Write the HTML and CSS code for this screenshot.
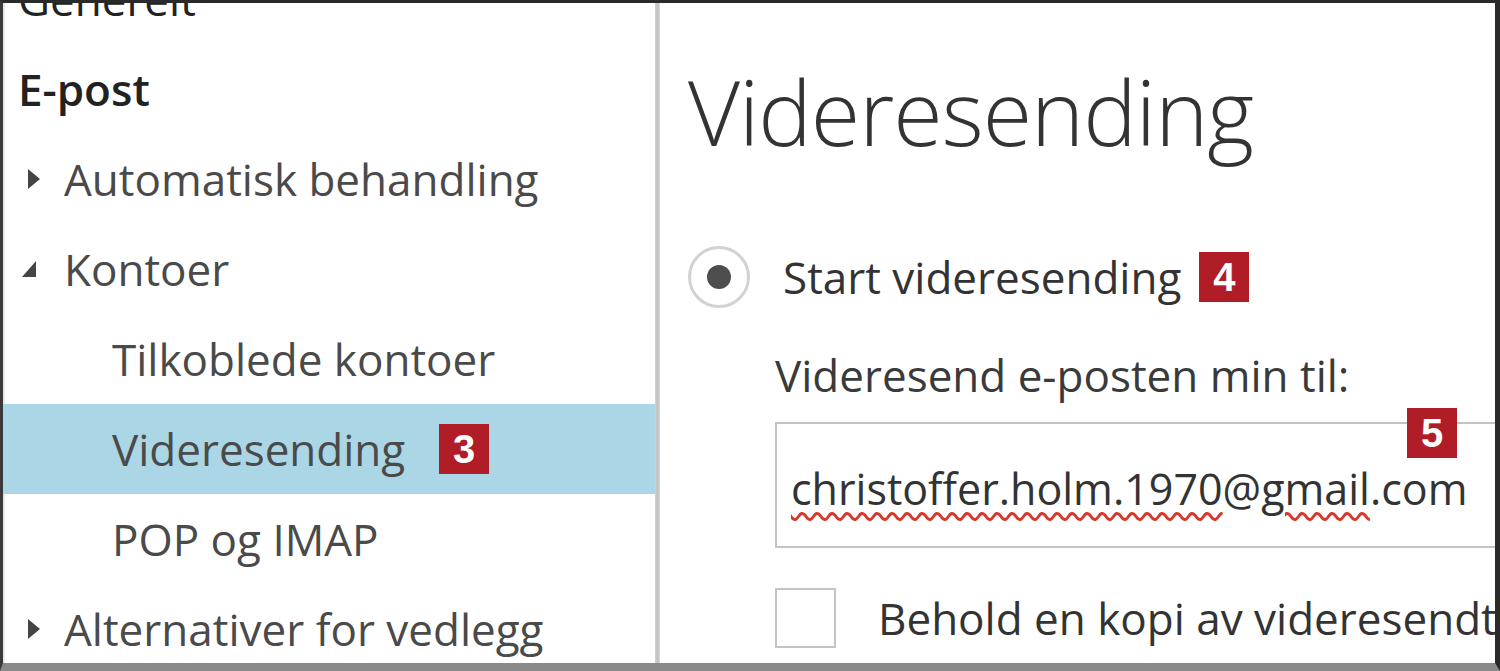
FILE: index.html
```html
<!DOCTYPE html>
<html lang="no">
<head>
<meta charset="utf-8">
<title>Videresending</title>
<link rel="stylesheet" href="styles.css">
</head>
<body>
<div class="frame">
  <nav class="nav">
    <div class="row top">Generelt</div>
    <div class="row top strong">E-post</div>
    <div class="row caret-row"><svg class="caret" width="16" height="24" viewBox="0 0 16 24"><polygon points="2,2 14,12 2,22" /></svg>Automatisk behandling</div>
    <div class="row caret-row"><svg class="caret open" width="16" height="24" viewBox="0 0 16 24"><polygon points="14,4 14,20 0,20" /></svg>Kontoer</div>
    <div class="row sub">Tilkoblede kontoer</div>
    <div class="row sub selected">Videresending <span class="badge">3</span></div>
    <div class="row sub">POP og IMAP</div>
    <div class="row caret-row"><svg class="caret" width="16" height="24" viewBox="0 0 16 24"><polygon points="2,2 14,12 2,22" /></svg>Alternativer for vedlegg</div>
  </nav>
  <div class="divider"></div>
  <main class="panel">
    <h1 class="title">Videresending</h1>
    <div class="radio-row">
      <span class="radio"><span class="dot"></span></span>
      <span class="radio-label">Start videresending</span>
      <span class="badge">4</span>
    </div>
    <div class="field">
      <div class="field-label">Videresend e-posten min til:</div>
      <div class="input-wrap">
        <span class="badge badge-5">5</span>
        <div class="input"><span class="wavy">christoffer.holm.1970</span>@<span class="wavy">gmail</span>.com</div>
      </div>
      <div class="check-row">
        <span class="checkbox"></span>
        <span class="check-label">Behold en kopi av videresendte meldinger</span>
      </div>
    </div>
  </main>
</div>
</body>
</html>
```

FILE: styles.css
```css
* { box-sizing: border-box; }
html, body { margin: 0; padding: 0; }
body {
  width: 1500px;
  height: 671px;
  overflow: hidden;
  background: #9a9a9a;
  font-family: "Open Sans", "Noto Sans", sans-serif;
  color: #444;
}
.frame {
  width: 1500px;
  height: 671px;
  display: flex;
  background: #fff;
  border-top: 3px solid #2a2a2a;
  border-left: 3px solid #3a3a3a;
  border-right: 5px solid #2a2a2a;
  border-bottom: 8px solid #8a8a8a;
  box-shadow: inset 2px 0 0 #e8e8e8;
  overflow: hidden;
}
.nav {
  width: 652px;
  flex: none;
  margin-top: -49px;
  padding-left: 15px;
  display: flex;
  flex-direction: column;
}
.row {
  height: 90px;
  line-height: 90px;
  font-size: 44px;
  white-space: nowrap;
  display: flex;
  align-items: center;
  color: #4a4a4a;
}
.row.top { color: #222; }
.row.strong { font-weight: 600; }
.caret-row { padding-left: 8px; }
.caret { fill: #444; margin-right: 22px; flex: none; }
.caret.open { margin-left: -4px; margin-right: 26px; }
.row.sub { padding-left: 94px; }
.row.selected {
  background: #abd6e5;
  margin-left: -15px;
  padding-left: 109px;
}
.badge {
  display: inline-flex;
  align-items: center;
  justify-content: center;
  width: 50px;
  height: 50px;
  background: #b01d26;
  color: #fff;
  font-family: "Liberation Sans", Arial, sans-serif;
  font-weight: 700;
  font-size: 40px;
  line-height: 1;
  margin-left: 34px;
}
.divider {
  width: 5px;
  flex: none;
  background: linear-gradient(90deg, #d4d4d4, #bdbdbd 60%, #e2e2e2);
}
.panel {
  flex: 1;
  padding-left: 28px;
  min-width: 0;
}
.title {
  margin: 54px 0 0;
  font-size: 90px;
  font-weight: 300;
  color: #333;
  line-height: 1.2;
  letter-spacing: -1px;
}
.radio-row {
  display: flex;
  align-items: center;
  margin-top: 81px;
  height: 62px;
}
.radio {
  width: 62px;
  height: 62px;
  border-radius: 50%;
  border: 3px solid #d2d2d2;
  display: flex;
  align-items: center;
  justify-content: center;
  flex: none;
}
.dot { width: 24px; height: 24px; border-radius: 50%; background: #4e4e4e; }
.radio-label { font-size: 44px; color: #333; margin-left: 33px; }
.radio-row .badge { margin-left: 18px; }
.field { padding-left: 87px; }
.field-label { font-size: 44px; color: #3a3a3a; margin-top: 37px; line-height: 60px; }
.input-wrap { position: relative; margin-top: 17px; }
.input {
  height: 126px;
  border: 2px solid #c4c4c4;
  border-right: none;
  padding-left: 14px;
  font-size: 43px;
  line-height: 130px;
  color: #333;
  white-space: nowrap;
}
.wavy {
  text-decoration: underline wavy #d8382c;
  text-decoration-thickness: 2.5px;
  text-underline-offset: 7px;
}
.badge-5 { position: absolute; left: 632px; top: -14px; margin: 0; }
.check-row { display: flex; align-items: center; margin-top: 40px; white-space: nowrap; }
.checkbox { width: 61px; height: 60px; border: 2px solid #c4c4c4; flex: none; }
.check-label { font-size: 44px; color: #333; margin-left: 42px; }
```
